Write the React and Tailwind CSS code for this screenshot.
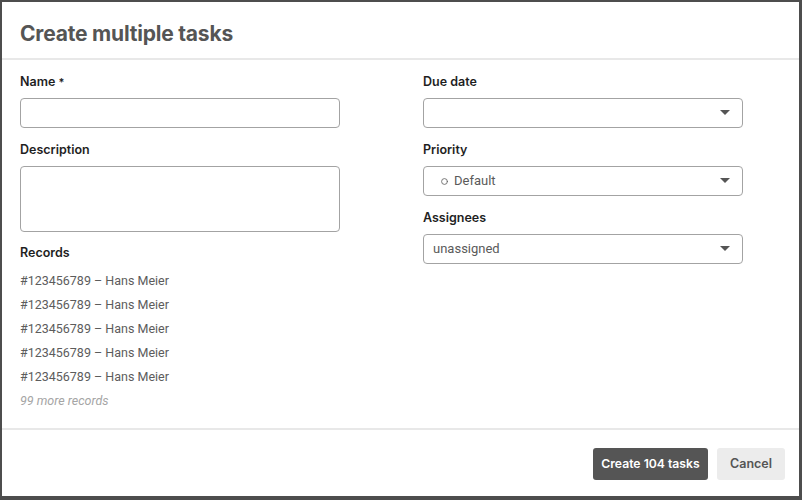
import { Circle } from 'lucide-react';

function Label({ children }) {
    return <div className="text-[12.5px] font-semibold text-[#1f1f1f] mb-[8px] leading-[16px]">{children}</div>;
}

function Select({ children }) {
    return (
        <div className="h-[30px] w-[320px] border border-[#a3a3a3] rounded-[4px] flex items-center justify-between pl-[9px] pr-[12px] text-[13px] text-[#5a5a5a]" style={{ fontFamily: 'Roboto, sans-serif' }}>
            <div className="flex items-center gap-[6px]">{children}</div>
            <svg width="10" height="6" viewBox="0 0 10 6"><path d="M0 0 L10 0 L5 5 Z" fill="#555" /></svg>
        </div>
    );
}

export default function App() {
    const records = Array.from({ length: 5 }, () => '#123456789 – Hans Meier');

    return (
        <div className="w-[802px] h-[500px] bg-[#4d4d4d] pl-[2px] pt-[2px] pr-[3px] pb-[4px]" style={{ fontFamily: 'Inter, "Noto Sans", sans-serif' }}>
            <div className="w-full h-full bg-white flex flex-col">
                {/* Header */}
                <div className="h-[58px] border-b-2 border-[#e8e8e8] flex items-center pl-[18px] pt-[7px]">
                    <h1 className="text-[21px] font-bold text-[#555] tracking-[-0.2px]">Create multiple tasks</h1>
                </div>

                {/* Body */}
                <div className="flex-1 flex pl-[18px] pt-[14px]">
                    <div className="w-[403px]">
                        <Label>Name <span className="text-[11px]">*</span></Label>
                        <div className="h-[30px] w-[320px] border border-[#a3a3a3] rounded-[4px]" />

                        <div className="mt-[14px]"><Label>Description</Label></div>
                        <div className="h-[66px] w-[320px] border border-[#a3a3a3] rounded-[4px]" />

                        <div className="mt-[13px]"><Label>Records</Label></div>
                        <div className="flex flex-col" style={{ fontFamily: 'Roboto, sans-serif' }}>
                            {records.map((r, i) => (
                                <div key={i} className="h-[24px] leading-[24px] text-[12.5px] text-[#5c5c5c]">{r}</div>
                            ))}
                            <div className="h-[23px] leading-[23px] text-[12.5px] italic text-[#a5a5a5]">99 more records</div>
                        </div>
                    </div>

                    <div className="w-[330px]">
                        <Label>Due date</Label>
                        <Select />

                        <div className="mt-[14px]"><Label>Priority</Label></div>
                        <Select>
                            <Circle size={7} strokeWidth={3} className="text-[#666] ml-[8px]" />
                            <span>Default</span>
                        </Select>

                        <div className="mt-[14px]"><Label>Assignees</Label></div>
                        <Select><span>unassigned</span></Select>
                    </div>
                </div>

                {/* Footer */}
                <div className="h-[68px] border-t-2 border-[#e8e8e8] flex items-center justify-end gap-[9px] pr-[14px] pt-[2px]">
                    <button className="h-[32px] w-[115px] bg-[#555] rounded-[3px] text-white text-[12.2px] font-semibold">Create 104 tasks</button>
                    <button className="h-[32px] w-[68px] bg-[#ececec] rounded-[3px] text-[#555] text-[12.5px] font-semibold">Cancel</button>
                </div>
            </div>
        </div>
    );
}
